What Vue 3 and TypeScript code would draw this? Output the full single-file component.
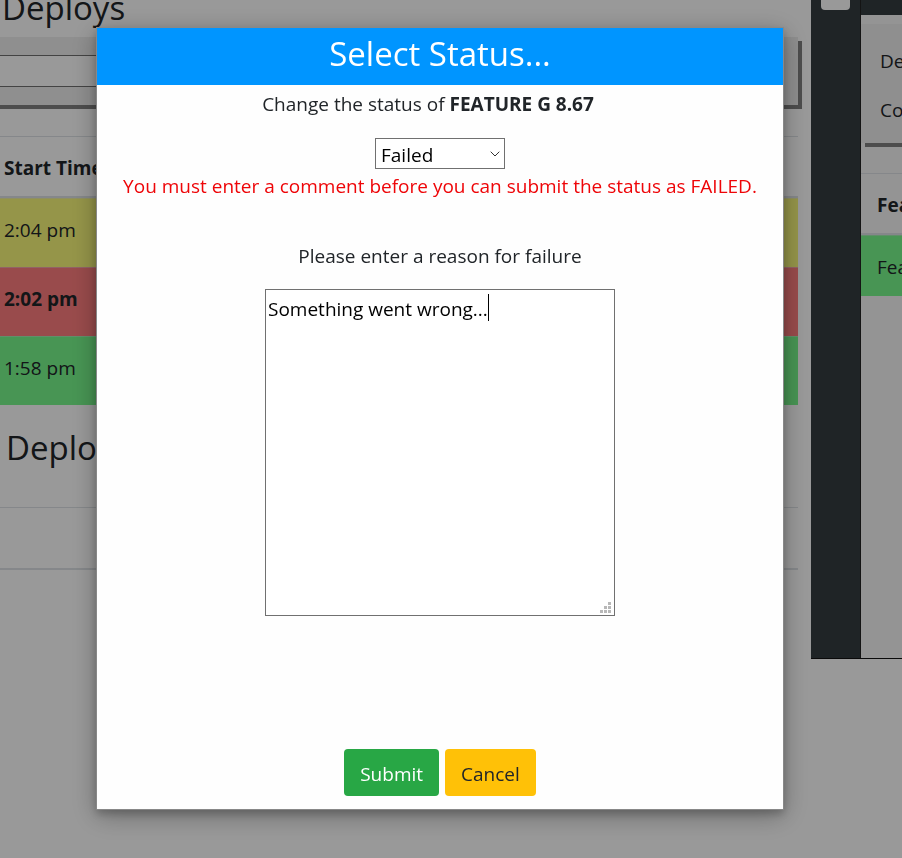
<script setup lang="ts">
import { onMounted, ref, watch } from 'vue'

interface Deploy {
  time: string
  tone: 'pending' | 'failed' | 'passed'
}

const deploys: Deploy[] = [
  { time: '2:04 pm', tone: 'pending' },
  { time: '2:02 pm', tone: 'failed' },
  { time: '1:58 pm', tone: 'passed' },
]

const status = ref('Failed')
const reason = ref('Something went wrong...')
const search = ref('')
const reasonBox = ref<HTMLTextAreaElement | null>(null)
const caretLeft = ref(0)

// Places the drawn caret after the last character of the comment.
function placeCaret() {
  const box = reasonBox.value
  const pen = document.createElement('canvas').getContext('2d')
  if (!box || !pen) return
  const style = getComputedStyle(box)
  pen.font = `${style.fontSize} ${style.fontFamily}`
  caretLeft.value = Math.round(pen.measureText(reason.value).width) + 3
}

onMounted(placeCaret)
watch(reason, placeCaret)
</script>

<template>
  <div class="page">
    <main class="board">
      <h2 class="title">Deploys</h2>
      <div class="filter">
        <input v-model="search" class="search" type="text" aria-label="Filter deploys" />
      </div>
      <table class="list">
        <thead>
          <tr><th>Start Time</th></tr>
        </thead>
        <tbody>
          <tr v-for="d in deploys" :key="d.time" :class="d.tone">
            <td>{{ d.time }}</td>
          </tr>
        </tbody>
      </table>
      <h2 class="title second">Deploys</h2>
      <div class="empty-list"></div>
    </main>

    <aside class="side">
      <div class="rail"><span class="grip"></span></div>
      <div class="preview">
        <div class="summary">
          <p>De</p>
          <p>Co</p>
        </div>
        <table class="list features">
          <thead>
            <tr><th>Fea</th></tr>
          </thead>
          <tbody>
            <tr class="passed"><td>Fea</td></tr>
          </tbody>
        </table>
      </div>
    </aside>
  </div>

  <div class="overlay">
    <form class="modal" role="dialog" aria-labelledby="dialog-title" @submit.prevent>
      <h1 id="dialog-title" class="modal-head">Select Status...</h1>
      <div class="modal-body">
        <label class="prompt" for="status">Change the status of <b>FEATURE G 8.67</b></label>
        <div class="select-wrap">
          <select id="status" v-model="status" class="select">
            <option>Failed</option>
          </select>
          <svg class="chevron" viewBox="0 0 10 6" width="10" height="6" aria-hidden="true">
            <path d="M0.7 0.7 L5 5 L9.3 0.7" fill="none" stroke="#333" stroke-width="1" />
          </svg>
        </div>
        <p class="warning">You must enter a comment before you can submit the status as FAILED.</p>
        <label class="reason-label" for="reason">Please enter a reason for failure</label>
        <div class="reason-wrap">
          <textarea id="reason" ref="reasonBox" v-model="reason" class="reason" spellcheck="false"></textarea>
          <span class="caret" :style="{ left: caretLeft + 'px' }"></span>
          <svg class="handle" viewBox="0 0 11 11" width="11" height="11" fill="#b8b8b8" aria-hidden="true">
            <path d="M8 0h3v3h-3z M4 4h3v3h-3z M8 4h3v3h-3z M0 8h3v3h-3z M4 8h3v3h-3z M8 8h3v3h-3z" />
          </svg>
        </div>
        <div class="actions">
          <button class="btn submit" type="submit">Submit</button>
          <button class="btn cancel" type="button">Cancel</button>
        </div>
      </div>
    </form>
  </div>
</template>

<style>
body {
  margin: 0;
  background: #fff;
  overflow: hidden;
}
</style>

<style scoped>
.page,
.overlay {
  box-sizing: border-box;
  font-family: 'Open Sans', 'Noto Sans', sans-serif;
  font-size: 19px;
  line-height: 30px;
  color: #212529;
}
.page *,
.overlay * {
  box-sizing: border-box;
}
.page {
  display: flex;
  align-items: flex-start;
  height: 100vh;
  overflow: hidden;
}
.board {
  flex: 1;
  padding-right: 13px;
}
.title {
  margin: -13px 0 8px;
  padding-left: 2px;
  font-size: 33px;
  font-weight: 400;
  line-height: 42px;
}
.title.second {
  margin: 22px 0 38px;
  padding-left: 6px;
}
.filter {
  margin-left: -4px;
  padding: 18px 0;
  background: #eee;
  box-shadow: 4px 4px 0 #808080;
}
.search {
  display: block;
  width: 60%;
  height: 32px;
  border: solid #707070;
  border-width: 1px 0;
  background: #fff;
  font: inherit;
}
.list {
  width: 100%;
  margin-top: 31px;
  border-spacing: 0;
  border-collapse: separate;
  text-align: left;
}
.list th {
  padding: 16px 4px 13px;
  border-top: 1px solid #dee2e6;
  border-bottom: 2px solid #dee2e6;
}
.list td {
  padding: 16px 4px 22px;
  border-top: 1px solid rgba(222, 226, 230, 0.4);
}
.pending {
  background: #f8f87a;
}
.failed {
  background: #ff7e7f;
  font-weight: 700;
}
.passed {
  background: #78f88c;
}
.empty-list {
  height: 63px;
  border-top: 1px solid #dee2e6;
  border-bottom: 2px solid #dee2e6;
}
.side {
  display: flex;
  width: 91px;
  height: 659px;
  overflow: hidden;
  border-bottom: 1px solid #111;
}
.rail {
  flex: none;
  width: 50px;
  padding-left: 10px;
  background: #353c40;
  border-right: 1px solid #222;
}
.grip {
  display: block;
  width: 29px;
  height: 10px;
  border-radius: 0 0 4px 4px;
  background: #fff;
}
.preview {
  flex: 1;
  min-width: 0;
  border-top: 15px solid #353c40;
  background: #f7f7f7;
}
.summary {
  margin-top: 9px;
  padding: 22px 0 18px 19px;
  background: #eee;
  box-shadow: 4px 4px 0 #808080;
}
.summary p {
  margin: 0 0 19px;
}
.summary p:last-child {
  margin: 0;
}
.features {
  margin-top: 30px;
}
.features th {
  padding: 16px 0 13px 16px;
}
.features td {
  padding: 16px 0 14px 16px;
}
.overlay {
  position: fixed;
  inset: 0;
  display: flex;
  align-items: flex-start;
  padding: 27px 118px 48px 96px;
  background: rgba(0, 0, 0, 0.4);
}
.modal {
  flex: 1;
  border: 1px solid #888;
  background: #fefefe;
  box-shadow: 0 4px 8px rgba(0, 0, 0, 0.2), 0 6px 24px rgba(0, 0, 0, 0.3);
}
.modal-head {
  margin: 0;
  padding: 5px 0 10px;
  background: #0095ff;
  color: #fff;
  font-size: 33px;
  font-weight: 400;
  line-height: 42px;
  text-align: center;
}
.modal-body {
  display: flex;
  flex-direction: column;
  align-items: center;
  padding: 4px 0 13px;
}
.prompt {
  padding-right: 24px;
}
.select-wrap {
  position: relative;
  margin: 19px 0 2px;
}
.select {
  display: block;
  width: 130px;
  height: 31px;
  padding: 1px 5px 0;
  border: 1px solid #707070;
  border-radius: 0;
  appearance: none;
  background: #fff;
  color: #000;
  font: inherit;
}
.chevron {
  position: absolute;
  top: 13px;
  right: 5px;
  pointer-events: none;
}
.warning {
  margin: 0 0 40px;
  color: #ee0508;
}
.reason-wrap {
  position: relative;
  margin: 18px 0 133px;
}
.reason {
  display: block;
  width: 350px;
  height: 327px;
  padding: 4px 2px;
  border: 1px solid #707070;
  outline: none;
  resize: none;
  caret-color: transparent;
  background: #fff;
  color: #000;
  font: inherit;
}
.caret {
  position: absolute;
  top: 5px;
  width: 1px;
  height: 27px;
  background: #000;
  pointer-events: none;
}
.handle {
  position: absolute;
  right: 4px;
  bottom: 3px;
  pointer-events: none;
}
.actions {
  display: flex;
  gap: 6px;
}
.btn {
  height: 47px;
  padding: 2px 16px 0;
  border: 0;
  border-radius: 4px;
  font: inherit;
}
.submit {
  background: #28a745;
  color: #fff;
}
.cancel {
  background: #ffc107;
  color: #212529;
}
</style>
